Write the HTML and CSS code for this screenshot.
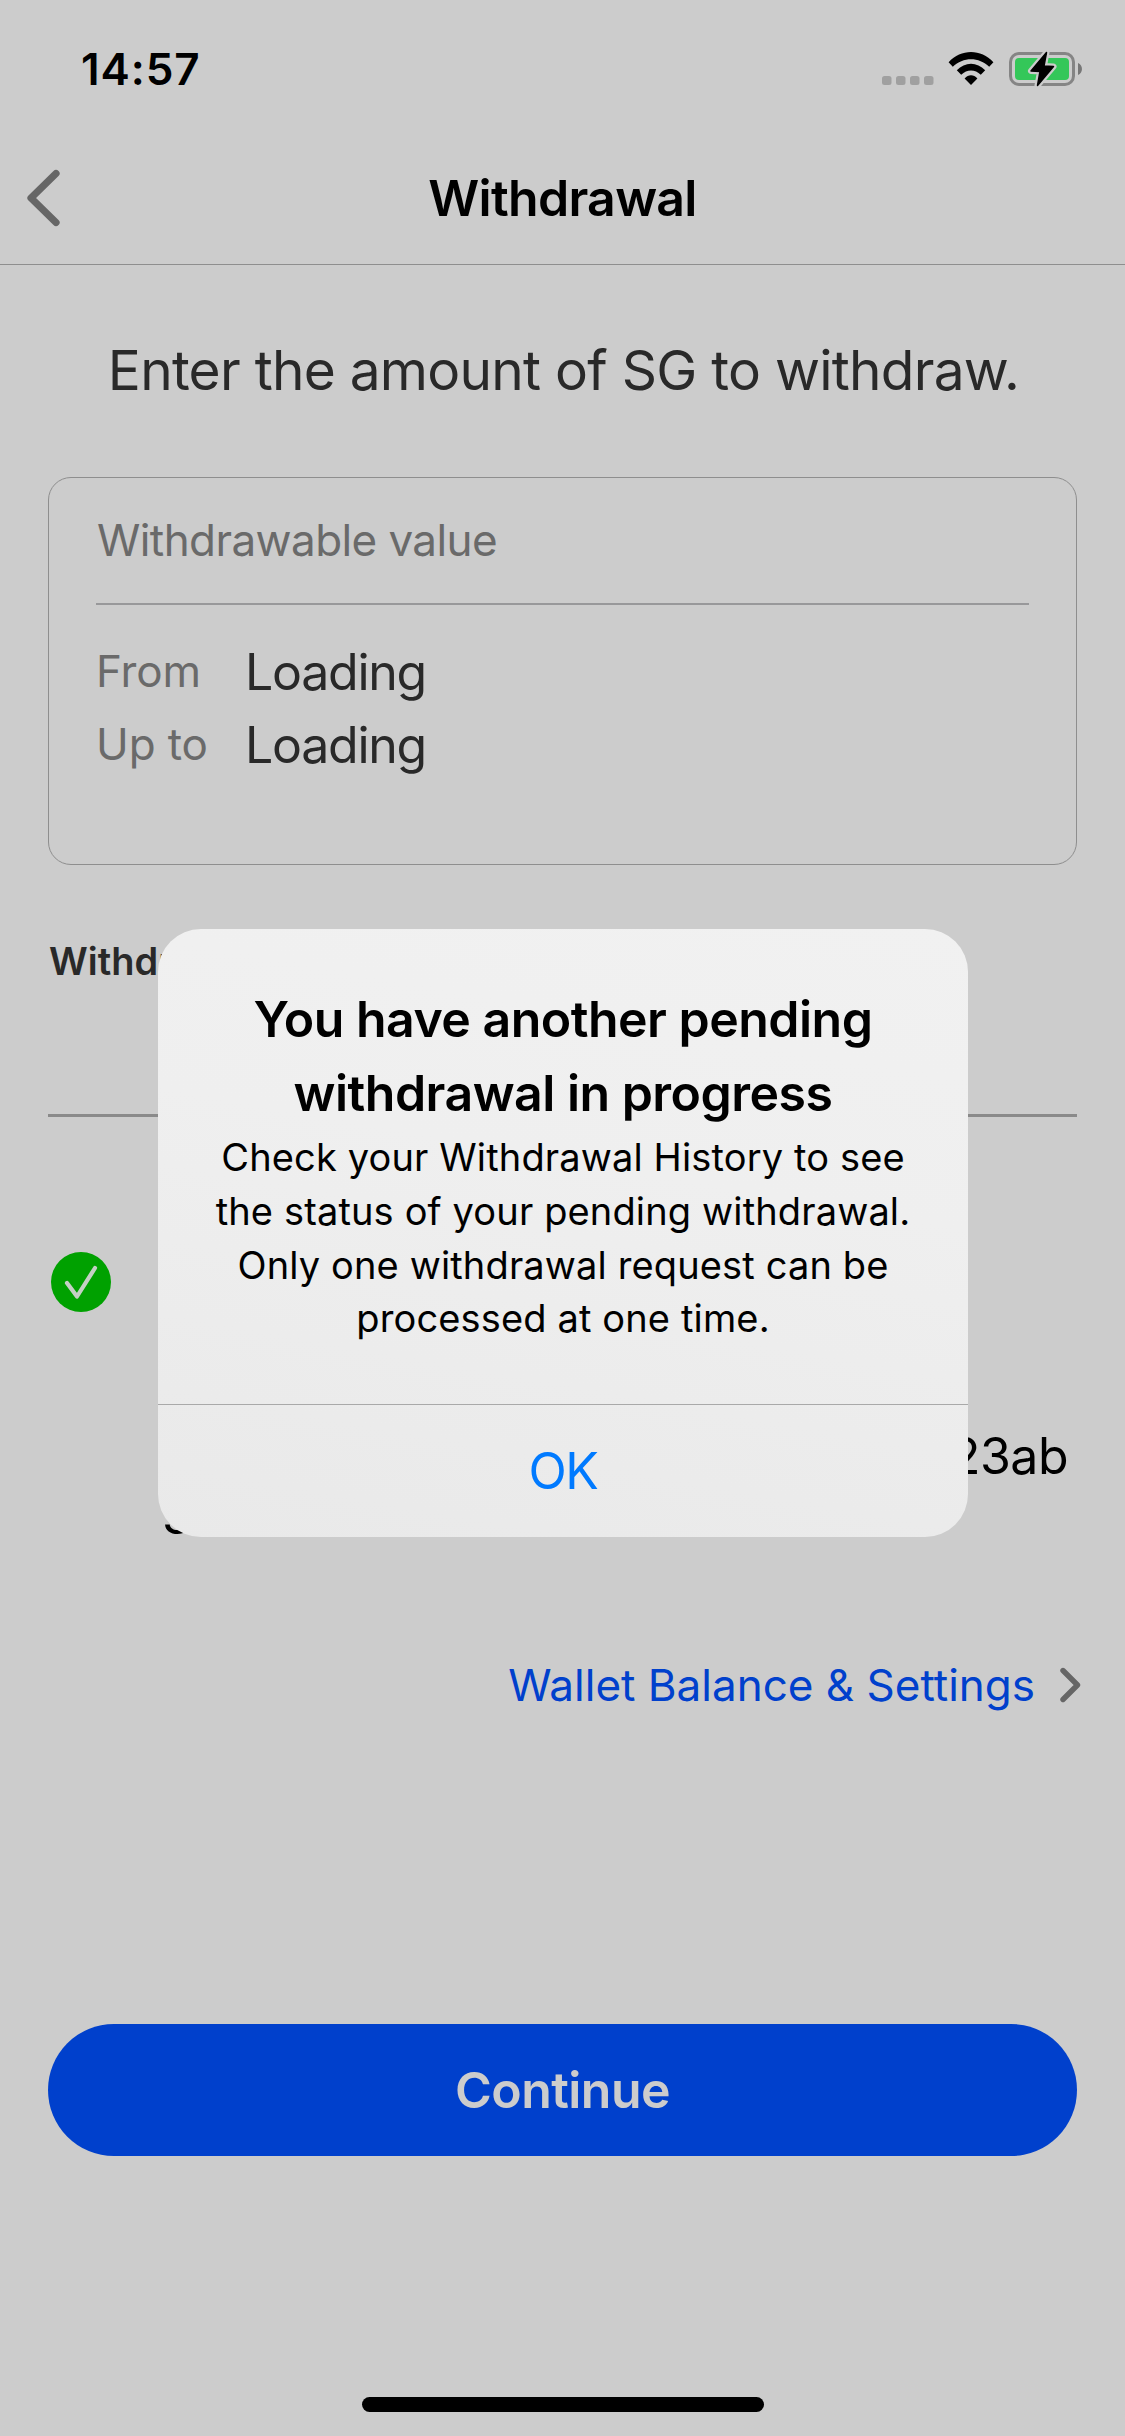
FILE: index.html
```html
<!DOCTYPE html>
<html lang="en">
<head>
<meta charset="utf-8">
<title>Withdrawal</title>
<link rel="stylesheet" href="styles.css">
</head>
<body>
<div class="screen">
  <div class="status-bar">
    <span class="time">14:57</span>
    <div class="indicators">
      <svg class="signal" width="52" height="9" viewBox="0 0 52 9" fill="#a0a0a0">
        <rect x="0" width="9.5" height="9" rx="2.5"/><rect x="14" width="9.5" height="9" rx="2.5"/><rect x="28" width="9.5" height="9" rx="2.5"/><rect x="42" width="9.5" height="9" rx="2.5"/>
      </svg>
      <svg class="wifi" width="46" height="34" viewBox="0 0 46 34">
        <path d="M0.6 10.2 C13 -3.4 33 -3.4 45.4 10.2 L41.2 14.7 C31 4.7 15 4.7 4.8 14.7 Z"/>
        <path d="M8.8 18.3 C17 9.4 29 9.4 37.2 18.3 L32.8 22.8 C27 17 19 17 13.2 22.8 Z"/>
        <path d="M16.6 26.4 C20.5 22.3 25.5 22.3 29.4 26.4 L23 33 Z"/>
      </svg>
      <svg class="battery" width="74" height="38" viewBox="0 0 74 38">
        <rect x="1.5" y="3.5" width="63" height="31" rx="8.5" fill="none" stroke="#858585" stroke-width="3"/>
        <rect x="6" y="8" width="54" height="22" rx="4" fill="#34c759"/>
        <path d="M69 13 C74.3 15 74.3 23 69 25 Z" fill="#777"/>
        <path d="M37.5 2.5 L22 21 L31 21.5 L28.5 35.5 L44.5 16.5 L35 16 Z" fill="#000" stroke="#ccc" stroke-width="6" stroke-linejoin="round"/>
        <path d="M37.5 2.5 L22 21 L31 21.5 L28.5 35.5 L44.5 16.5 L35 16 Z" stroke="#000" stroke-width="1.5" stroke-linejoin="round"/>
      </svg>
    </div>
  </div>

  <header class="nav">
    <svg class="back" width="34" height="58" viewBox="0 0 34 58"><path d="M30 4.5 L5 29 L30 53.5"/></svg>
    <h1 class="nav-title">Withdrawal</h1>
  </header>

  <main class="content">
    <p class="lead">Enter the amount of SG to withdraw.</p>

    <section class="card">
      <h2 class="card-title">Withdrawable value</h2>
      <dl class="limits">
        <dt class="label">From</dt><dd class="value">Loading</dd>
        <dt class="label">Up to</dt><dd class="value">Loading</dd>
      </dl>
    </section>

    <div class="field-label">Withdrawal</div>
    <div class="field"></div>

    <svg class="check" width="60" height="60" viewBox="0 0 60 60">
      <circle cx="30" cy="30" r="30" fill="#00a100"/>
      <path d="M16 31 L26 44.5 L44 16" fill="none" stroke="#c4d0c4" stroke-width="4.2" stroke-linecap="round" stroke-linejoin="round"/>
    </svg>

    <div class="address">
      <span class="address-end">23ab</span>
      <span class="address-rest">3</span>
    </div>

    <a class="wallet">
      <span>Wallet Balance &amp; Settings</span>
      <svg width="21" height="36" viewBox="0 0 21 36"><path d="M3 3.5 L17.5 18 L3 32.5"/></svg>
    </a>

    <button class="continue" type="button">Continue</button>
  </main>

  <div class="home-indicator"></div>

  <div class="alert" role="alertdialog">
    <div class="alert-body">
      <h3 class="alert-title">You have another pending<br>withdrawal in progress</h3>
      <p class="alert-text">Check your Withdrawal History to see<br>the status of your pending withdrawal.<br>Only one withdrawal request can be<br>processed at one time.</p>
    </div>
    <button class="alert-ok" type="button">OK</button>
  </div>
</div>
</body>
</html>
```
FILE: styles.css
```css
* { box-sizing: border-box; margin: 0; padding: 0; }

body {
  background: #ccc;
  font-family: Inter, "Liberation Sans", sans-serif;
  color: #000;
}

button { border: 0; font: inherit; }

.screen {
  position: relative;
  display: flex;
  flex-direction: column;
  width: 1125px;
  height: 2436px;
  overflow: hidden;
  background: #ccc;
}

.status-bar {
  display: flex;
  align-items: center;
  justify-content: space-between;
  height: 132px;
  padding: 6px 42px 0 81px;
}

.time { font-size: 44px; font-weight: 600; letter-spacing: 0.9px; }

.indicators { display: flex; align-items: center; }
.signal { margin: 23px 14px 0 0; }
.wifi { margin-right: 15px; }

.nav {
  display: grid;
  grid-template-columns: 1fr auto 1fr;
  align-items: center;
  height: 133px;
  padding: 0 26px;
  border-bottom: 1px solid #8e8e8e;
}

.back path {
  fill: none;
  stroke: #666;
  stroke-width: 7.2;
  stroke-linecap: round;
  stroke-linejoin: round;
}

.nav-title { font-size: 50px; font-weight: 600; letter-spacing: -0.7px; }

.content { display: flex; flex-direction: column; padding: 65px 48px 0; }

.lead {
  margin-bottom: 67px;
  padding-left: 2px;
  color: #292929;
  font-size: 55px;
  line-height: 80px;
  letter-spacing: -0.74px;
  text-align: center;
  white-space: nowrap;
}

.card {
  height: 388px;
  padding: 32px 47px 0;
  border: 1px solid #8e8e8e;
  border-radius: 23px;
}

.card-title {
  padding: 0 1px 33px;
  border-bottom: 2px solid #98989a;
  color: #6a6a6a;
  font-size: 44px;
  font-weight: 400;
  line-height: 60px;
  letter-spacing: -0.58px;
}

.limits {
  display: grid;
  grid-template-columns: 149px 1fr;
  grid-auto-rows: 73px;
  align-items: center;
  margin-top: 30px;
}

.label {
  padding-bottom: 2px;
  color: #6a6a6a;
  font-size: 44px;
  letter-spacing: -0.1px;
}

.value { color: #292929; font-size: 50px; letter-spacing: -1.25px; }

.field-label {
  margin-top: 73px;
  padding-left: 1px;
  color: #292929;
  font-size: 38px;
  font-weight: 600;
  line-height: 46px;
}

.field { height: 133px; border-bottom: 3px solid #8a8a8a; }

.check { margin: 135px 0 0 3px; }

.address {
  display: flex;
  flex-direction: column;
  margin-top: 114px;
  padding: 0 9px 0 114px;
  font-size: 50px;
  line-height: 60px;
  letter-spacing: -0.5px;
}

.address-end { align-self: flex-end; }

.wallet {
  display: flex;
  align-items: center;
  align-self: flex-end;
  gap: 25px;
  height: 60px;
  margin: 109px -4px 0 0;
  color: #0040cc;
  font-size: 44px;
}

.wallet path {
  fill: none;
  stroke: #666;
  stroke-width: 5.4;
  stroke-linecap: round;
  stroke-linejoin: round;
}

.continue {
  height: 132px;
  margin-top: 309px;
  border-radius: 66px;
  background: #0040cc;
  color: #ccc;
  font-size: 50px;
  font-weight: 600;
  letter-spacing: -0.55px;
}

.home-indicator {
  width: 402px;
  height: 15px;
  margin: 241px auto 0;
  border-radius: 8px;
  background: #000;
}

.alert {
  position: absolute;
  top: 929px;
  left: 158px;
  display: flex;
  flex-direction: column;
  width: 810px;
  height: 608px;
  overflow: hidden;
  border-radius: 43px;
  background: linear-gradient(190deg, #f1f1f1, #efefef 40%, #e9e9e9);
  text-align: center;
}

.alert-body { height: 475px; padding-top: 53px; }

.alert-title {
  font-size: 50px;
  font-weight: 600;
  line-height: 74px;
  letter-spacing: -0.51px;
}

.alert-text {
  padding-top: 1px;
  font-size: 38px;
  line-height: 53.8px;
  letter-spacing: 0.14px;
}

.alert-ok {
  height: 133px;
  border-top: 1px solid #a9a9a9;
  background: transparent;
  color: #007aff;
  font-size: 50px;
  letter-spacing: -1.5px;
}
```
